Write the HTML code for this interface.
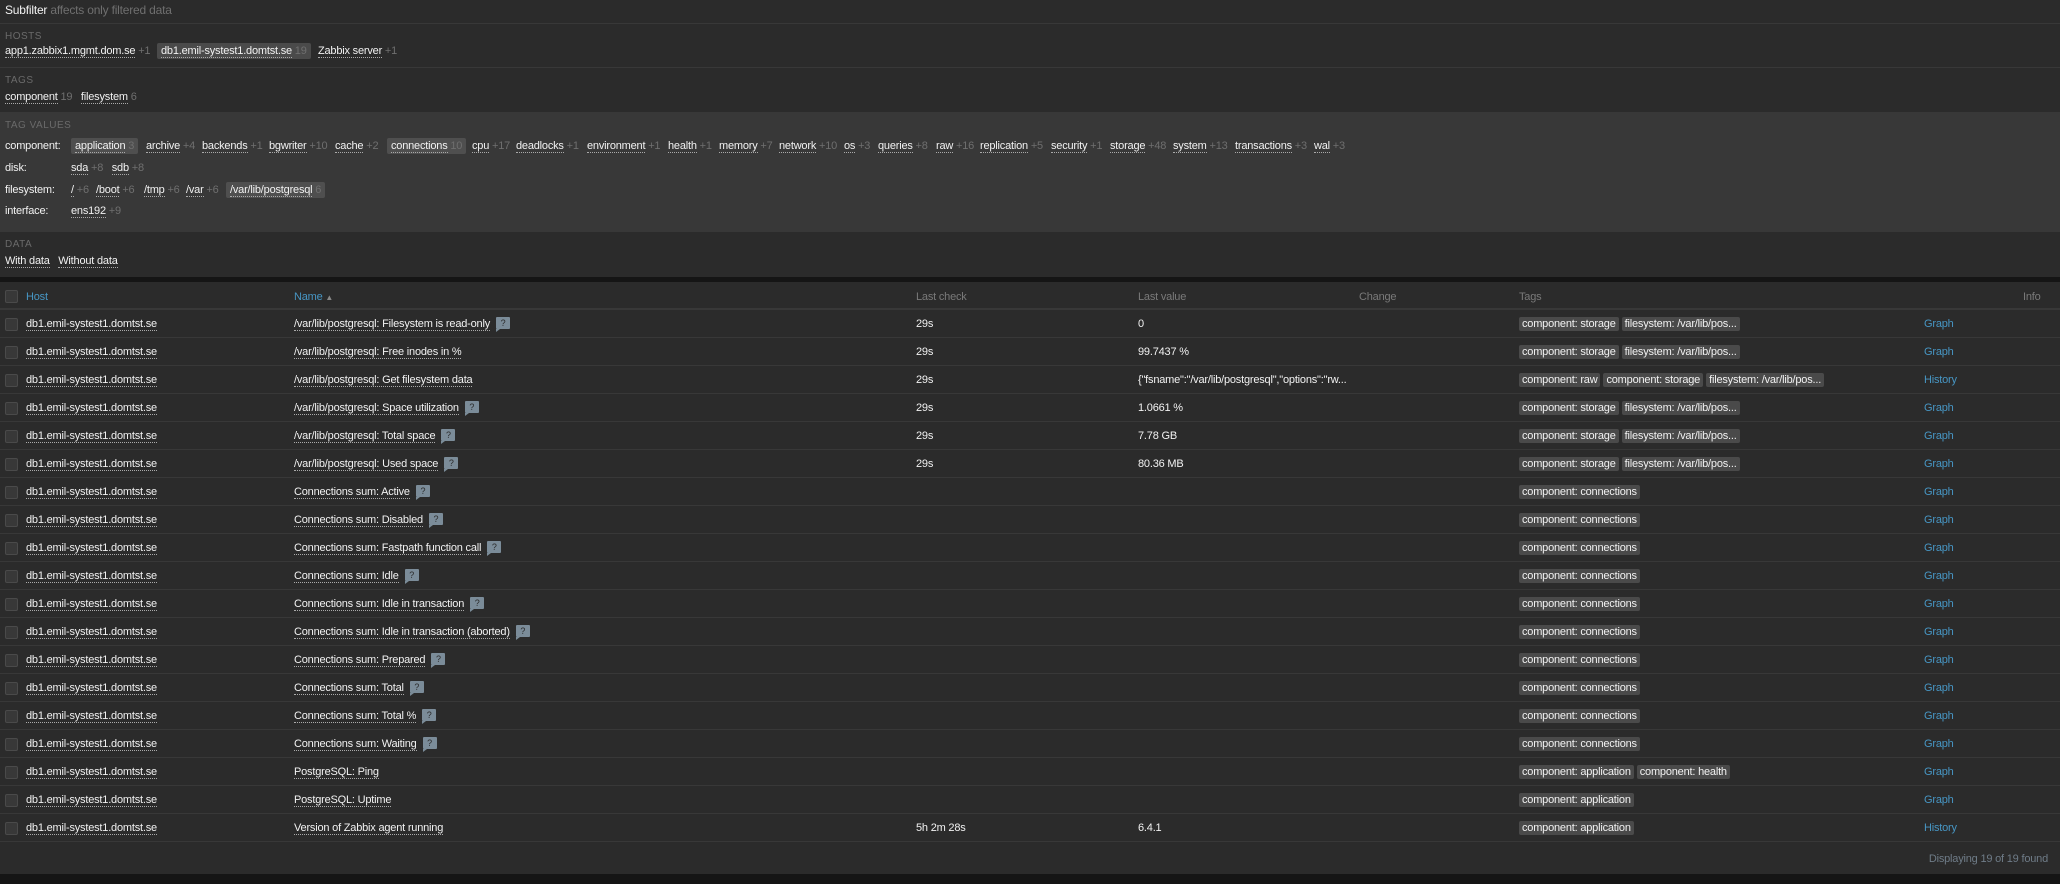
<!DOCTYPE html>
<html><head><meta charset="utf-8"><style>
*{margin:0;padding:0;box-sizing:border-box}
body{width:2060px;height:884px;background:#2b2b2b;font-family:"Liberation Sans",Arial,sans-serif;font-size:11px;letter-spacing:-0.2px;color:#f2f2f2;position:relative;overflow:hidden}
.a{position:absolute;white-space:nowrap;line-height:14px}
.u{border-bottom:1px dotted #aaa}
.g{color:#6f6f6f}
.lbl{color:#6a6a6a;font-size:10px;letter-spacing:.5px}
.pill{background:#4a4a4a;padding:1px 4px;border-radius:2px}
.hr{position:absolute;left:0;width:2060px;height:1px;background:#383838}
.row{position:absolute;left:0;width:2060px;height:28px;border-bottom:1px solid #383838}
.row>div{position:absolute;top:7px;white-space:nowrap;line-height:14px}
.cb{position:absolute;left:5px;top:8px;width:13px;height:13px;border:1px solid #4a4a4a;background:#383838;border-radius:2px}
.tag{background:#4a4a4a;padding:1px 3px;border-radius:2px;margin-right:3px}
.lnk{color:#4796c4}
.h{display:inline-block;width:14px;height:12px;background:#7b8c99;border-radius:1px;color:#2b2b2b;font-size:9px;text-align:center;line-height:12px;margin-left:6px;vertical-align:1px;position:relative}
.h:after{content:"";position:absolute;left:0;bottom:-3px;border-left:4px solid #7b8c99;border-bottom:3px solid transparent}
.th{color:#7a7a7a}
.thl{color:#4796c4}
</style></head><body>
<div class="a" style="left:5px;top:3px;font-size:12px">Subfilter <span class="g">affects only filtered data</span></div>
<div class="hr" style="top:23px"></div>
<div class="a lbl" style="left:5px;top:30px">HOSTS</div>
<div class="a" style="left:5px;top:44px"><span class="u">app1.zabbix1.mgmt.dom.se</span> <span class="g">+1</span></div>
<div class="a pill" style="left:157px;top:43px"><span class="u">db1.emil-systest1.domtst.se</span> <span class="g">19</span></div>
<div class="a" style="left:318px;top:44px"><span class="u">Zabbix server</span> <span class="g">+1</span></div>
<div class="hr" style="top:67px"></div>
<div class="a lbl" style="left:5px;top:74px">TAGS</div>
<div class="a" style="left:5px;top:90px"><span class="u">component</span> <span class="g">19</span>&nbsp;&nbsp;&nbsp;<span class="u">filesystem</span> <span class="g">6</span></div>
<div style="position:absolute;left:0;top:112px;width:2060px;height:120px;background:#383838"></div>
<div class="a lbl" style="left:5px;top:119px">TAG VALUES</div>
<div class="a" style="left:5px;top:139px">component:</div>
<div class="a" style="left:5px;top:161px">disk:</div>
<div class="a" style="left:5px;top:183px">filesystem:</div>
<div class="a" style="left:5px;top:204px">interface:</div>
<div class="a pill" style="left:71px;top:138px;background:#4f4f4f"><span class="u">application</span> <span class="g">3</span></div>
<div class="a" style="left:146px;top:139px"><span class="u">archive</span> <span class="g">+4</span></div>
<div class="a" style="left:202px;top:139px"><span class="u">backends</span> <span class="g">+1</span></div>
<div class="a" style="left:269px;top:139px"><span class="u">bgwriter</span> <span class="g">+10</span></div>
<div class="a" style="left:335px;top:139px"><span class="u">cache</span> <span class="g">+2</span></div>
<div class="a pill" style="left:387px;top:138px;background:#4f4f4f"><span class="u">connections</span> <span class="g">10</span></div>
<div class="a" style="left:472px;top:139px"><span class="u">cpu</span> <span class="g">+17</span></div>
<div class="a" style="left:516px;top:139px"><span class="u">deadlocks</span> <span class="g">+1</span></div>
<div class="a" style="left:587px;top:139px"><span class="u">environment</span> <span class="g">+1</span></div>
<div class="a" style="left:668px;top:139px"><span class="u">health</span> <span class="g">+1</span></div>
<div class="a" style="left:719px;top:139px"><span class="u">memory</span> <span class="g">+7</span></div>
<div class="a" style="left:779px;top:139px"><span class="u">network</span> <span class="g">+10</span></div>
<div class="a" style="left:844px;top:139px"><span class="u">os</span> <span class="g">+3</span></div>
<div class="a" style="left:878px;top:139px"><span class="u">queries</span> <span class="g">+8</span></div>
<div class="a" style="left:936px;top:139px"><span class="u">raw</span> <span class="g">+16</span></div>
<div class="a" style="left:980px;top:139px"><span class="u">replication</span> <span class="g">+5</span></div>
<div class="a" style="left:1051px;top:139px"><span class="u">security</span> <span class="g">+1</span></div>
<div class="a" style="left:1110px;top:139px"><span class="u">storage</span> <span class="g">+48</span></div>
<div class="a" style="left:1173px;top:139px"><span class="u">system</span> <span class="g">+13</span></div>
<div class="a" style="left:1235px;top:139px"><span class="u">transactions</span> <span class="g">+3</span></div>
<div class="a" style="left:1314px;top:139px"><span class="u">wal</span> <span class="g">+3</span></div>
<div class="a" style="left:71px;top:161px"><span class="u">sda</span> <span class="g">+8</span>&nbsp;&nbsp;&nbsp;<span class="u">sdb</span> <span class="g">+8</span></div>
<div class="a" style="left:71px;top:183px"><span class="u">/</span> <span class="g">+6</span></div>
<div class="a" style="left:96px;top:183px"><span class="u">/boot</span> <span class="g">+6</span></div>
<div class="a" style="left:144px;top:183px"><span class="u">/tmp</span> <span class="g">+6</span></div>
<div class="a" style="left:186px;top:183px"><span class="u">/var</span> <span class="g">+6</span></div>
<div class="a pill" style="left:226px;top:182px;background:#4f4f4f"><span class="u">/var/lib/postgresql</span> <span class="g">6</span></div>
<div class="a" style="left:71px;top:204px"><span class="u">ens192</span> <span class="g">+9</span></div>
<div class="a lbl" style="left:5px;top:238px">DATA</div>
<div class="a" style="left:5px;top:254px"><span class="u">With data</span>&nbsp;&nbsp;&nbsp;<span class="u">Without data</span></div>
<div style="position:absolute;left:0;top:277px;width:2060px;height:5px;background:#151515"></div>
<div class="row" style="top:282px;border-bottom:2px solid #383838">
<span class="cb" style="top:8px"></span>
<div class="thl" style="left:26px;top:8px">Host</div>
<div class="thl" style="left:294px;top:8px">Name <span style="color:#888;font-size:8px">▲</span></div>
<div class="th" style="left:916px;top:8px">Last check</div>
<div class="th" style="left:1138px;top:8px">Last value</div>
<div class="th" style="left:1359px;top:8px">Change</div>
<div class="th" style="left:1519px;top:8px">Tags</div>
<div class="th" style="left:2023px;top:8px">Info</div>
</div>
<div id="rows"></div>
<script>
var H='<span class="h">?</span>';
var R=[
['/var/lib/postgresql: Filesystem is read-only',1,'29s','0',['component: storage','filesystem: /var/lib/pos...'],'Graph'],
['/var/lib/postgresql: Free inodes in %',0,'29s','99.7437 %',['component: storage','filesystem: /var/lib/pos...'],'Graph'],
['/var/lib/postgresql: Get filesystem data',0,'29s','{"fsname":"/var/lib/postgresql","options":"rw...',['component: raw','component: storage','filesystem: /var/lib/pos...'],'History'],
['/var/lib/postgresql: Space utilization',1,'29s','1.0661 %',['component: storage','filesystem: /var/lib/pos...'],'Graph'],
['/var/lib/postgresql: Total space',1,'29s','7.78 GB',['component: storage','filesystem: /var/lib/pos...'],'Graph'],
['/var/lib/postgresql: Used space',1,'29s','80.36 MB',['component: storage','filesystem: /var/lib/pos...'],'Graph'],
['Connections sum: Active',1,'','',['component: connections'],'Graph'],
['Connections sum: Disabled',1,'','',['component: connections'],'Graph'],
['Connections sum: Fastpath function call',1,'','',['component: connections'],'Graph'],
['Connections sum: Idle',1,'','',['component: connections'],'Graph'],
['Connections sum: Idle in transaction',1,'','',['component: connections'],'Graph'],
['Connections sum: Idle in transaction (aborted)',1,'','',['component: connections'],'Graph'],
['Connections sum: Prepared',1,'','',['component: connections'],'Graph'],
['Connections sum: Total',1,'','',['component: connections'],'Graph'],
['Connections sum: Total %',1,'','',['component: connections'],'Graph'],
['Connections sum: Waiting',1,'','',['component: connections'],'Graph'],
['PostgreSQL: Ping',0,'','',['component: application','component: health'],'Graph'],
['PostgreSQL: Uptime',0,'','',['component: application'],'Graph'],
['Version of Zabbix agent running',0,'5h 2m 28s','6.4.1',['component: application'],'History']];
var s='';
R.forEach(function(r,i){
var t=r[4].map(function(x){return '<span class="tag">'+x+'</span>'}).join('');
s+='<div class="row" style="top:'+(310+28*i)+'px"><span class="cb"></span><div style="left:26px"><span class="u">db1.emil-systest1.domtst.se</span></div><div style="left:294px"><span class="u">'+r[0]+'</span>'+(r[1]?H:'')+'</div><div style="left:916px">'+r[2]+'</div><div style="left:1138px">'+r[3].replace(/</g,'&lt;')+'</div><div style="left:1519px">'+t+'</div><div class="lnk" style="left:1924px">'+r[5]+'</div></div>';
});
document.getElementById('rows').innerHTML=s;
</script>
<div class="a" style="right:12px;top:852px;color:#6f7c88">Displaying 19 of 19 found</div>
<div style="position:absolute;left:0;top:874px;width:2060px;height:10px;background:#151515"></div>
</body></html>
